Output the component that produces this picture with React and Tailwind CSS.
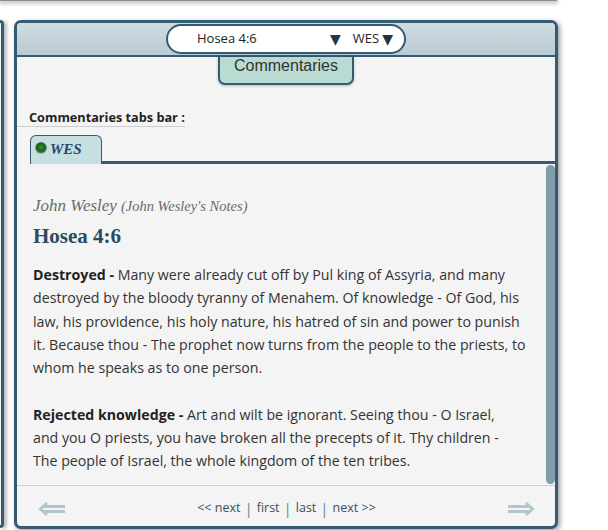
import React from "react";

const BORDER = "border-[#335b74]";

function DoubleArrow({ dir }) {
  const left = dir === "left";
  return (
    <svg width="28" height="16" viewBox="0 0 28 16" className="block">
      <g
        stroke="#b3c6ce"
        strokeWidth="3"
        fill="none"
        strokeLinecap="butt"
        strokeLinejoin="miter"
        transform={left ? "" : "translate(28,0) scale(-1,1)"}
      >
        <polyline points="9,2 2.5,8 9,14" />
        <line x1="6" y1="5.5" x2="27" y2="5.5" />
        <line x1="6" y1="10.5" x2="27" y2="10.5" />
      </g>
    </svg>
  );
}

export default function App() {
  const body = "font-['Open_Sans',sans-serif]";
  return (
    <div className="w-[608px] h-[530px] bg-white overflow-hidden">
      {/* panel above (bottom edge only visible) */}
      <div className="h-[1px] w-[557px] bg-[#8c8c8c] shadow-[0_1px_4px_1px_rgba(0,0,0,0.35)]" />

      <div className="flex mt-[19px]">
        {/* left neighbouring panel edge */}
        <div
          className={`w-[4px] h-[508px] border-r-[3px] border-t-[3px] border-b-[3px] ${BORDER} rounded-r-[5px] bg-[#f4f4f4] shadow-[2px_1px_4px_rgba(0,0,0,0.4)]`}
        />

        {/* main panel */}
        <div
          className={`ml-[10px] w-[544px] h-[509px] border-[3px] ${BORDER} rounded-[7px] bg-[#f4f4f4] flex flex-col overflow-hidden shadow-[2px_2px_5px_rgba(0,0,0,0.4)]`}
        >
          {/* header */}
          <div
            className={`h-[34px] shrink-0 border-b-2 ${BORDER} bg-gradient-to-b from-[#d0dce2] to-[#b9cbd2] flex justify-center items-start pt-[1px]`}
          >
            <div
              className={`w-[240px] h-[30px] rounded-full border-2 ${BORDER} bg-white flex items-center pl-[29px] pr-[11px] text-[13px] text-[#222] ${body}`}
            >
              <span>Hosea 4:6</span>
              <span className="ml-auto text-[#1e3848] font-['DejaVu_Sans',sans-serif] text-[14px] leading-[14px]">▼</span>
              <span className="ml-[12px]">WES</span>
              <span className="ml-[3px] text-[#1e3848] font-['DejaVu_Sans',sans-serif] text-[14px] leading-[14px]">▼</span>
            </div>
          </div>

          {/* top section */}
          <div className="shrink-0 flex flex-col">
            <div className="flex justify-center">
              <div
                className={`w-[136px] h-[28px] border-2 border-t-0 ${BORDER} rounded-b-[7px] bg-[#b9dbd2] text-center text-[16px] leading-[18px] text-[#333] font-['Liberation_Sans',Arial,sans-serif] shadow-[0_1px_3px_rgba(0,0,0,0.25)]`}
              >
                Commentaries
              </div>
            </div>

            <div className="mt-[23px] self-start pl-[12px] border-b border-[#cfcfcf] leading-[17px]">
              <span className={`text-[12.7px] font-bold text-[#222] ${body}`}>
                Commentaries tabs bar :
              </span>
            </div>

            <div className="mt-[8px] flex items-end h-[29px]">
              <div className="w-[13px] shrink-0" />
              <div
                className={`w-[72px] h-[29px] border-[1.5px] border-b-0 ${BORDER} rounded-t-[6px] bg-[#c6dfe0] flex items-start pt-[6px] pl-[4px] gap-[3px]`}
              >
                <span className="mt-[0px] w-[12px] h-[12px] rounded-full bg-[radial-gradient(circle_at_50%_45%,#2e9a2e_0%,#136b13_38%,#3b5b40_52%,#94a9ab_70%,rgba(160,178,180,0)_100%)]" />
                <span className="text-[15px] leading-[14px] italic font-bold text-[#2b4866] font-['Liberation_Serif',serif]">
                  WES
                </span>
              </div>
              <div className={`flex-1 border-b-[3px] ${BORDER}`} />
            </div>
          </div>

          {/* content with scrollbar */}
          <div className="flex-1 flex min-h-0">
            <div className={`flex-1 pl-[16px] pt-[32px] ${body}`}>
              <div className="font-['Liberation_Serif',serif] italic text-[#6a6a6a] leading-[20px] whitespace-nowrap">
                <span className="text-[17px]">John Wesley</span>{" "}
                <span className="text-[14.5px]">(John Wesley's Notes)</span>
              </div>
              <div className="mt-[8px] font-['Liberation_Serif',serif] font-bold text-[21px] leading-[24px] text-[#2a4b63]">
                Hosea 4:6
              </div>
              <div className="mt-[15px] text-[14.2px] leading-[23.3px] text-[#333] whitespace-nowrap">
                <p>
                  <b className="text-[#222]">Destroyed -</b> Many were already cut off by Pul king of Assyria, and many
                  <br />
                  destroyed by the bloody tyranny of Menahem. Of knowledge - Of God, his
                  <br />
                  law, his providence, his holy nature, his hatred of sin and power to punish
                  <br />
                  it. Because thou - The prophet now turns from the people to the priests, to
                  <br />
                  whom he speaks as to one person.
                </p>
                <p className="mt-[23.3px]">
                  <b className="text-[#222]">Rejected knowledge -</b> Art and wilt be ignorant. Seeing thou - O Israel,
                  <br />
                  and you O priests, you have broken all the precepts of it. Thy children -
                  <br />
                  The people of Israel, the whole kingdom of the ten tribes.
                </p>
              </div>
            </div>
            <div className="w-[9px] shrink-0 pt-[1px] pb-[1px] flex">
              <div className="w-[9px] flex-1 rounded-full bg-[#7f9ea8]" />
            </div>
          </div>

          {/* footer */}
          <div className="h-[41px] shrink-0 border-t border-[#c7d0d5] flex items-center justify-between pl-[21px] pr-[20px]">
            <div className="mt-[6px]">
              <DoubleArrow dir="left" />
            </div>
            <div className={`mt-[5px] text-[12.5px] text-[#3b4f5d] flex items-center ${body}`}>
              <span>&lt;&lt; next</span>
              <span className="mx-[4px] text-[#6f8290] text-[15px] leading-[15px]">|</span>
              <span>first</span>
              <span className="mx-[4px] text-[#6f8290] text-[15px] leading-[15px]">|</span>
              <span>last</span>
              <span className="mx-[4px] text-[#6f8290] text-[15px] leading-[15px]">|</span>
              <span>next &gt;&gt;</span>
            </div>
            <div className="mt-[6px]">
              <DoubleArrow dir="right" />
            </div>
          </div>
        </div>
      </div>
    </div>
  );
}
